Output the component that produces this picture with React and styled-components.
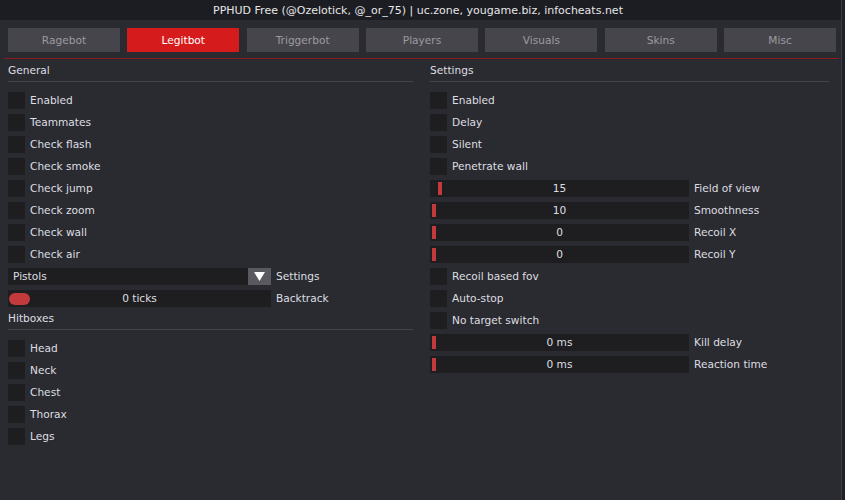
import styled, { createGlobalStyle } from "styled-components";

const GlobalStyle = createGlobalStyle`
    html, body {
        margin: 0;
        padding: 0;
        background: #1f2029;
    }
    body {
        font-family: "DejaVu Sans", Verdana, sans-serif;
        font-size: 10.6px;
        color: #dedee0;
    }
`;

const Window = styled.div`
    width: 841px;
    height: 500px;
    background: #2a2b31;
    border-right: 1px solid #3b3c42;
    display: flex;
    flex-direction: column;
`;

const TitleBar = styled.div`
    height: 20px;
    background: #1c1d22;
    color: #e6e6e8;
    display: flex;
    align-items: center;
    justify-content: center;
    font-size: 11px;
    padding-right: 5px;
`;

const Tabs = styled.div`
    display: flex;
    gap: 7.5px;
    padding: 8px 5px 0 8px;
    height: 24px;
`;

const Tab = styled.div`
    flex: 1;
    display: flex;
    align-items: center;
    justify-content: center;
    background: ${p => p.$active ? '#d61b1c' : '#46454b'};
    color: ${p => p.$active ? '#ffffff' : '#9c9ba1'};
`;

const RedLine = styled.div`
    height: 1px;
    margin: 6px 2px 0 4px;
    background: #8b1a1c;
`;

const Columns = styled.div`
    display: flex;
    padding-left: 8px;
    gap: 17px;
`;

const Column = styled.div`
    width: ${p => p.$width}px;
    display: flex;
    flex-direction: column;
`;

const Header = styled.div`
    height: ${p => p.$tight ? 20 : 22}px;
    line-height: ${p => p.$tight ? 19 : 22}px;
    border-bottom: 1px solid #45464b;
    margin-bottom: 7px;
`;

const Row = styled.div`
    height: 22px;
    display: flex;
    align-items: center;
    gap: 5px;
`;

const Box = styled.div`
    width: 17px;
    height: 17px;
    background: #1e1e21;
`;

const Slider = styled.div`
    position: relative;
    width: ${p => p.$width}px;
    height: 17px;
    background: #1e1e21;
    display: flex;
    align-items: center;
    justify-content: center;
`;

const Handle = styled.div`
    position: absolute;
    top: 2px;
    left: ${p => p.$left}px;
    width: 4px;
    height: 13px;
    background: #c23a3c;
`;

const Pill = styled.div`
    position: absolute;
    top: 3px;
    left: 1px;
    width: 21px;
    height: 12px;
    border-radius: 6px;
    background: #c23a3c;
`;

const Combo = styled.div`
    width: 263px;
    height: 17px;
    background: #1e1e21;
    display: flex;
    align-items: center;
    justify-content: space-between;
    padding-left: 5px;
    box-sizing: border-box;
`;

const ArrowBtn = styled.div`
    width: 23px;
    height: 17px;
    background: #5a595f;
    display: flex;
    align-items: center;
    justify-content: center;
`;

const Check = ({ label }) => (
    <Row>
        <Box />
        <span>{label}</span>
    </Row>
)

const SliderRow = ({ value, label, handle, width }) => (
    <Row>
        <Slider $width={width}>
            <Handle $left={handle} />
            {value}
        </Slider>
        <span>{label}</span>
    </Row>
)

const tabs = ['Ragebot', 'Legitbot', 'Triggerbot', 'Players', 'Visuals', 'Skins', 'Misc'];

const general = ['Enabled', 'Teammates', 'Check flash', 'Check smoke', 'Check jump', 'Check zoom', 'Check wall', 'Check air'];

const hitboxes = ['Head', 'Neck', 'Chest', 'Thorax', 'Legs'];

export default function App() {
    return (
        <>
            <GlobalStyle />
            <Window>
                <TitleBar>PPHUD Free (@Ozelotick, @_or_75) | uc.zone, yougame.biz, infocheats.net</TitleBar>
                <Tabs>
                    {tabs.map(t => <Tab key={t} $active={t === 'Legitbot'}>{t}</Tab>)}
                </Tabs>
                <RedLine />
                <Columns>
                    <Column $width={405}>
                        <Header>General</Header>
                        {general.map(g => <Check key={g} label={g} />)}
                        <Row>
                            <Combo>
                                Pistols
                                <ArrowBtn>
                                    <svg width="11" height="9" viewBox="0 0 11 9">
                                        <polygon points="0,0 11,0 5.5,9" fill="#ffffff" />
                                    </svg>
                                </ArrowBtn>
                            </Combo>
                            <span>Settings</span>
                        </Row>
                        <Row>
                            <Slider $width={263}>
                                <Pill />
                                0 ticks
                            </Slider>
                            <span>Backtrack</span>
                        </Row>
                        <Header $tight>Hitboxes</Header>
                        {hitboxes.map(h => <Check key={h} label={h} />)}
                    </Column>
                    <Column $width={399}>
                        <Header>Settings</Header>
                        <Check label="Enabled" />
                        <Check label="Delay" />
                        <Check label="Silent" />
                        <Check label="Penetrate wall" />
                        <SliderRow width={259} value="15" label="Field of view" handle={8} />
                        <SliderRow width={259} value="10" label="Smoothness" handle={2} />
                        <SliderRow width={259} value="0" label="Recoil X" handle={2} />
                        <SliderRow width={259} value="0" label="Recoil Y" handle={2} />
                        <Check label="Recoil based fov" />
                        <Check label="Auto-stop" />
                        <Check label="No target switch" />
                        <SliderRow width={259} value="0 ms" label="Kill delay" handle={2} />
                        <SliderRow width={259} value="0 ms" label="Reaction time" handle={2} />
                    </Column>
                </Columns>
            </Window>
        </>
    )
}
